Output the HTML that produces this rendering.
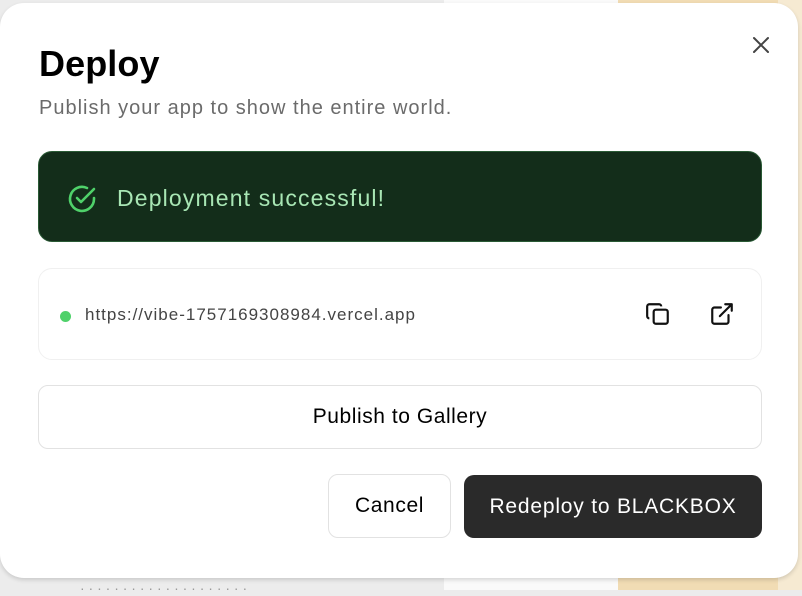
<!DOCTYPE html>
<html><head><style>
*{box-sizing:border-box;margin:0;padding:0}
body{width:802px;height:590px;overflow:hidden;font-family:"Liberation Sans",sans-serif;background:#ececec;position:relative}
.bg1{position:absolute;left:444px;top:0;width:174px;height:590px;background:#fafafa}
.bg2{position:absolute;left:618px;top:0;width:160px;height:590px;background:#f1dcb4}
.bg3{position:absolute;left:778px;top:0;width:24px;height:590px;background:#f6ead2}
.faint{position:absolute;left:80px;top:580px;color:#999;font-size:14px}
.modal{position:absolute;left:0;top:3px;width:798px;height:575px;background:#fff;border-radius:24px;box-shadow:0 2px 4px rgba(0,0,0,.15)}
h1{position:absolute;left:39px;top:40px;font-size:36px;font-weight:700;color:#000;letter-spacing:0.1px}
.sub{position:absolute;left:39px;top:94px;font-size:20px;color:#6b6b6b;letter-spacing:1px}
.close{position:absolute;left:752px;top:33px}
.ok{position:absolute;left:38px;top:148px;width:724px;height:91px;background:#132d1a;border:1px solid #2a5a35;border-radius:14px}
.ok svg{position:absolute;left:27px;top:31px}
.ok span{position:absolute;left:78px;top:33px;font-size:23px;color:#a8e6b4;letter-spacing:1.15px}
.url{position:absolute;left:38px;top:265px;width:724px;height:92px;border:1px solid #f0f0f0;border-radius:14px}
.dot{position:absolute;left:21px;top:42px;width:11px;height:11px;border-radius:50%;background:#4fd16a}
.url span{position:absolute;left:46px;top:36px;font-size:17px;color:#444;letter-spacing:1px}
.btn{position:absolute;border:1px solid #e2e2e2;border-radius:10px;background:#fff;text-align:center;font-size:21px;color:#000}
.dark{position:absolute;left:464px;top:472px;width:298px;height:63px;background:#2a2a2a;border-radius:10px;color:#fff;font-size:21px;text-align:center;line-height:63px;letter-spacing:0.8px}
</style></head><body>
<div class="bg1"></div><div class="bg2"></div><div class="bg3"></div>
<div class="faint">· · · · · · · · · · · · · · · · · · · ·</div>
<div class="modal">
<h1>Deploy</h1>
<div class="sub">Publish your app to show the entire world.</div>
<svg class="close" width="18" height="18" viewBox="0 0 18 18"><path d="M2 2L16 16M16 2L2 16" stroke="#444" stroke-width="2" stroke-linecap="round"/></svg>
<div class="ok"><svg width="32" height="32" viewBox="0 0 32 32" fill="none" stroke="#4fd16a" stroke-width="2.6" stroke-linecap="round" stroke-linejoin="round"><path d="M28 15v1a12 12 0 1 1-7-11"/><path d="M11 15l4 4L28 6"/></svg><span>Deployment successful!</span></div>
<div class="url"><div class="dot"></div><span>https://vibe-1757169308984.vercel.app</span>
<svg style="position:absolute;left:606px;top:32px" width="26" height="26" viewBox="0 0 24 24" fill="none" stroke="#111" stroke-width="2" stroke-linejoin="round"><rect x="8" y="8" width="13" height="13" rx="2"/><path d="M4 16a2 2 0 0 1-2-2V5a2 2 0 0 1 2-2h9a2 2 0 0 1 2 2"/></svg>
<svg style="position:absolute;left:670px;top:32px" width="26" height="26" viewBox="0 0 24 24" fill="none" stroke="#111" stroke-width="2" stroke-linecap="round" stroke-linejoin="round"><path d="M18 13v6a2 2 0 0 1-2 2H5a2 2 0 0 1-2-2V8a2 2 0 0 1 2-2h6"/><path d="M15 3h6v6M10 14L21 3"/></svg>
</div>
<div class="btn" style="left:38px;top:382px;width:724px;height:64px;line-height:62px;letter-spacing:0.55px">Publish to Gallery</div>
<div class="btn" style="left:328px;top:471px;width:123px;height:64px;line-height:62px;letter-spacing:0.6px">Cancel</div>
<div class="dark">Redeploy to BLACKBOX</div>
</div>
</body></html>
